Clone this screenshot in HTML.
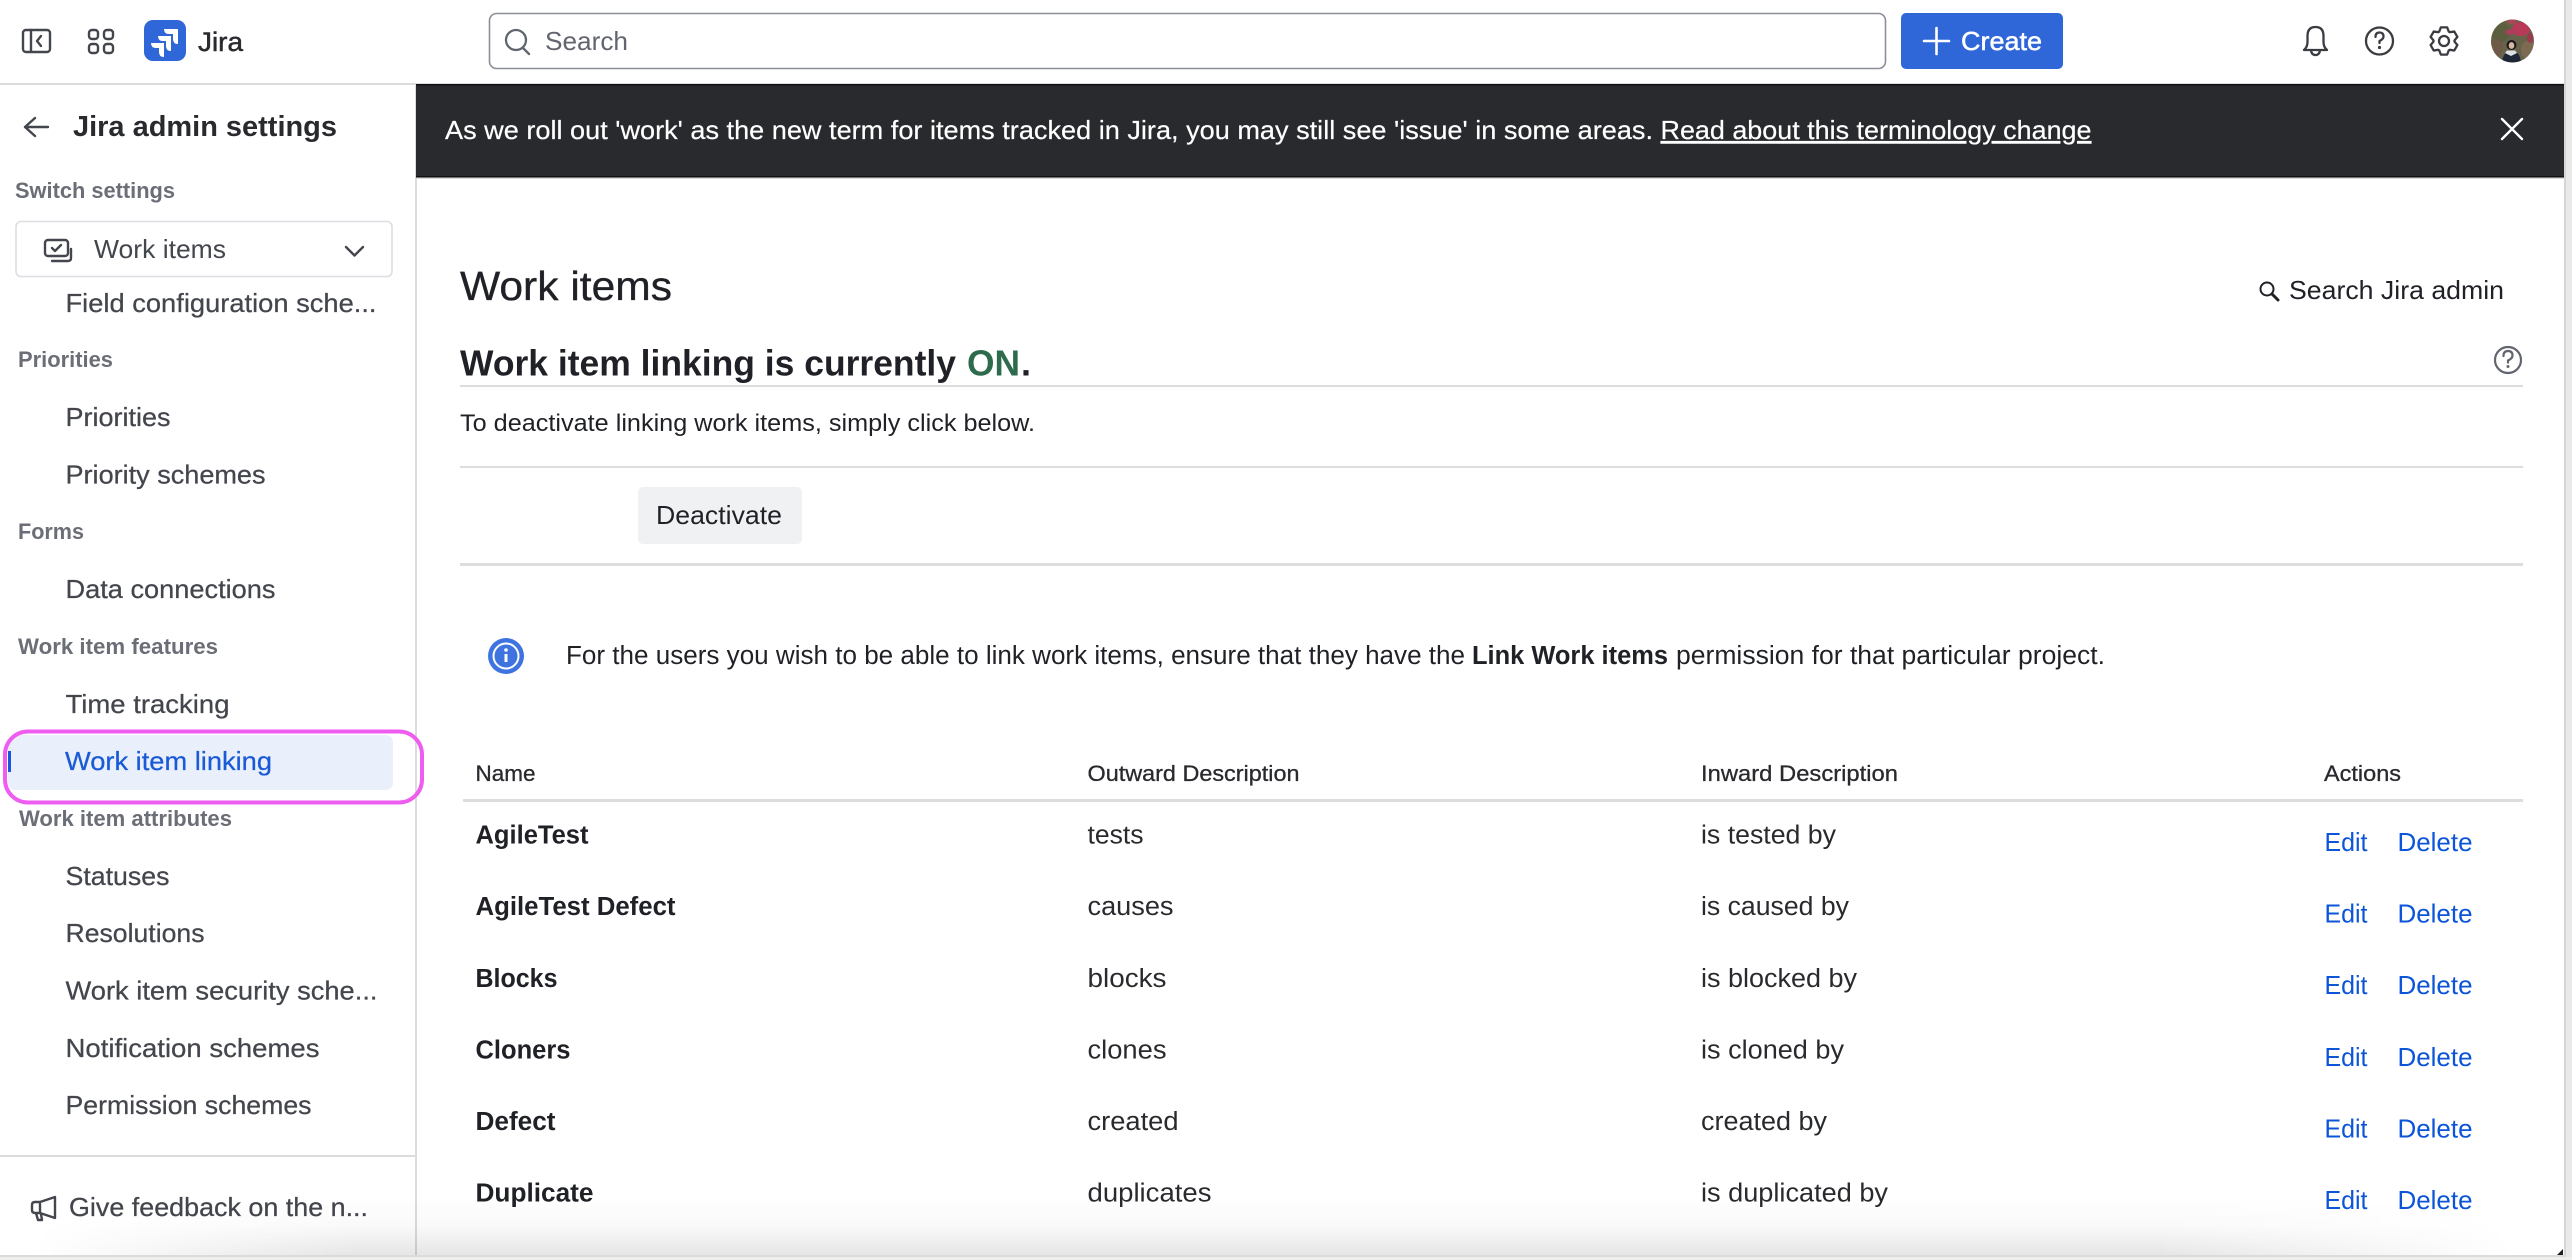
<!DOCTYPE html>
<html lang="en">
<head>
<meta charset="utf-8">
<title>Work item linking - Jira admin settings</title>
<style>
html,body{margin:0;padding:0;width:2572px;height:1260px;overflow:hidden;background:#fff}
svg{display:block}
text{font-family:"Liberation Sans",Arial,sans-serif;white-space:pre}
.nav{font-size:26px;fill:#44464d;stroke:#44464d;stroke-width:.25px}
.hd{font-size:22px;font-weight:700;fill:#6b6e76}
.n{font-size:25.5px;font-weight:700;fill:#1f2126}
.c{font-size:25.5px;fill:#292a2e}
.th{font-size:22.5px;fill:#292a2e;stroke:#292a2e;stroke-width:.3px}
.a{font-size:26px;fill:#0c55d8}
.ic{fill:none;stroke:#44464d;stroke-width:2.4;stroke-linecap:round;stroke-linejoin:round}
</style>
</head>
<body>
<svg width="2572" height="1260" viewBox="0 0 2572 1260" xmlns="http://www.w3.org/2000/svg">
<defs>
<linearGradient id="sv" gradientUnits="userSpaceOnUse" x1="0" y1="1195" x2="0" y2="1255">
<stop offset="0" stop-color="#000" stop-opacity="0"/>
<stop offset=".5" stop-color="#000" stop-opacity=".02"/>
<stop offset="1" stop-color="#000" stop-opacity=".1"/>
</linearGradient>
<linearGradient id="sh" gradientUnits="userSpaceOnUse" x1="0" y1="0" x2="2566" y2="0">
<stop offset=".012" stop-color="#fff" stop-opacity="0"/>
<stop offset=".14" stop-color="#fff" stop-opacity="1"/>
<stop offset=".84" stop-color="#fff" stop-opacity="1"/>
<stop offset=".98" stop-color="#fff" stop-opacity="0"/>
</linearGradient>
<mask id="shm" maskUnits="userSpaceOnUse" x="0" y="1195" width="2566" height="60">
<rect x="0" y="1195" width="2566" height="60" fill="url(#sh)"/>
</mask>
<clipPath id="av"><circle cx="2512.500" cy="41" r="21.500"/></clipPath>
</defs>
<rect width="2572" height="1260" fill="#fff"/>

<!-- top bar -->
<rect x="0" y="83" width="2564" height="2" fill="#dcdcdc"/>
<g class="ic">
<rect x="23" y="30" width="27" height="22" rx="3"/>
<path d="M31 30v22M41 36l-4 5 4 5"/>
<rect x="89" y="30" width="9" height="9" rx="3"/><rect x="104" y="30" width="9" height="9" rx="3"/>
<rect x="89" y="44" width="9" height="9" rx="3"/><rect x="104" y="44" width="9" height="9" rx="3"/>
</g>
<rect x="144" y="20" width="42" height="41" rx="9" fill="#2f66d8"/>
<path fill="#fff" d="M164 29h14v15q-5 0-5-5v-5h-4q-5 0-5-5zM158 36h13v15q-5 0-5-5v-5h-3q-5 0-5-5zM151 43h13v14q-5 0-5-5v-4h-3q-5 0-5-5z"/>
<text x="198" y="51" font-size="26.5" fill="#292a2e" stroke="#292a2e" stroke-width=".5" textLength="45" lengthAdjust="spacingAndGlyphs">Jira</text>

<rect x="489.5" y="13.5" width="1396" height="55" rx="7" fill="#fff" stroke="#8c8f97" stroke-width="1.6"/>
<circle cx="516" cy="40" r="10" fill="none" stroke="#5f6570" stroke-width="2.3"/>
<path d="M523 48l6 6" stroke="#5f6570" stroke-width="2.3" stroke-linecap="round"/>
<text x="545" y="50" font-size="26" fill="#626570" textLength="83" lengthAdjust="spacingAndGlyphs">Search</text>

<rect x="1901" y="13" width="162" height="56" rx="5" fill="#2f66d8"/>
<path d="M1936.500 28v26M1924 41h25" stroke="#fff" stroke-width="2.6" stroke-linecap="round"/>
<text x="1961" y="50" font-size="26" fill="#fff" stroke="#fff" stroke-width=".5" textLength="81" lengthAdjust="spacingAndGlyphs">Create</text>

<g fill="none" stroke="#3a3c42" stroke-width="2.3" stroke-linecap="round" stroke-linejoin="round">
<path d="M2304 50q3.500-3 3.500-8v-6q0-9 8-9t8 9v6q0 5 3.500 8zM2311 50q.5 5 4.500 5t4.500-5"/>
<circle cx="2379.500" cy="41" r="13.500"/>
<path d="M2375.500 37q0-4.500 4-4.500t4 4q0 2.500-4 4.500v2"/>
<path transform="translate(2444 41)" d="M-3.150-13.640 3.150-13.640 4.770-9.360 5.720-8.810 10.240-9.550 13.390-4.090 10.490-.55 10.490.55 13.390 4.090 10.240 9.550 5.720 8.810 4.770 9.360 3.150 13.640-3.150 13.640-4.770 9.360-5.720 8.810-10.240 9.550-13.390 4.090-10.490.55-10.490-.55-13.390-4.090-10.240-9.550-5.720-8.810-4.770-9.360z"/>
<circle cx="2444" cy="41" r="5"/>
</g>
<circle cx="2379.500" cy="47.500" r="1.600" fill="#3a3c42"/>

<g clip-path="url(#av)">
<rect x="2490" y="18" width="46" height="46" fill="#66634a"/>
<ellipse cx="2500" cy="32" rx="10" ry="10" fill="#5b5f40"/>
<ellipse cx="2496" cy="48" rx="7" ry="9" fill="#6f5a48"/>
<ellipse cx="2528" cy="50" rx="7" ry="9" fill="#7d6a52"/>
<ellipse cx="2521" cy="29" rx="9" ry="7" fill="#b83a58"/>
<ellipse cx="2510" cy="32" rx="5" ry="3" fill="#a8405a"/>
<ellipse cx="2512" cy="21.500" rx="5" ry="2.500" fill="#a84a55"/>
<ellipse cx="2530" cy="38" rx="3" ry="5" fill="#9c3a4c"/>
<circle cx="2511.500" cy="45" r="5" fill="#1c1a1e"/>
<ellipse cx="2511.500" cy="45.500" rx="2.800" ry="3.400" fill="#d8b8a0"/>
<path d="M2502 64q.5-13 9.500-13t9.500 13z" fill="#1d2738"/>
<path d="M2505 53l6 3 6-3-2-2.500h-8z" fill="#dfe2e4"/>
</g>

<!-- sidebar -->
<rect x="415" y="85" width="2" height="1170" fill="#dcdcdc"/>
<path d="M48 127H25M35 118l-10 9 10 9" fill="none" stroke="#44464d" stroke-width="2.4" stroke-linecap="round" stroke-linejoin="round"/>
<text x="73" y="136" font-size="29" font-weight="700" fill="#292a2e" textLength="264" lengthAdjust="spacingAndGlyphs">Jira admin settings</text>
<text x="15" y="198" class="hd" textLength="160" lengthAdjust="spacingAndGlyphs">Switch settings</text>
<rect x="16" y="221.500" width="376" height="55" rx="5" fill="#fff" stroke="#dddee1" stroke-width="1.600"/>
<g class="ic" stroke-width="2.200">
<rect x="45" y="240" width="23" height="16" rx="3"/>
<path d="M52 248l3 3 6-6M71 249v9q0 3-3 3H52"/>
</g>
<text x="94" y="258" font-size="26" fill="#44464d" textLength="132" lengthAdjust="spacingAndGlyphs">Work items</text>
<path d="M346 247l8.500 8.500L363 247" fill="none" stroke="#44464d" stroke-width="2.400" stroke-linecap="round" stroke-linejoin="round"/>
<text x="65.500" y="312" class="nav" textLength="311" lengthAdjust="spacingAndGlyphs">Field configuration sche...</text>

<text x="18" y="367" class="hd" textLength="95" lengthAdjust="spacingAndGlyphs">Priorities</text>
<text x="65.500" y="426" class="nav" textLength="105" lengthAdjust="spacingAndGlyphs">Priorities</text>
<text x="65.500" y="483.500" class="nav" textLength="200" lengthAdjust="spacingAndGlyphs">Priority schemes</text>
<text x="18" y="539" class="hd" textLength="66" lengthAdjust="spacingAndGlyphs">Forms</text>
<text x="65.500" y="598" class="nav" textLength="210" lengthAdjust="spacingAndGlyphs">Data connections</text>
<text x="18" y="654" class="hd" textLength="200" lengthAdjust="spacingAndGlyphs">Work item features</text>
<text x="65.500" y="713" class="nav" textLength="164" lengthAdjust="spacingAndGlyphs">Time tracking</text>

<rect x="8" y="735" width="385" height="55" rx="7" fill="#e9f0fc"/>
<rect x="8" y="751" width="3" height="21" fill="#1558e0"/>
<text x="65" y="770" font-size="26" fill="#1a5ad6" stroke="#1a5ad6" stroke-width=".25" textLength="207" lengthAdjust="spacingAndGlyphs">Work item linking</text>
<rect x="5" y="731.500" width="417" height="71" rx="23" fill="none" stroke="#ee5cf0" stroke-width="4"/>

<text x="19" y="826" class="hd" textLength="213" lengthAdjust="spacingAndGlyphs">Work item attributes</text>
<text x="65.500" y="885" class="nav" textLength="104" lengthAdjust="spacingAndGlyphs">Statuses</text>
<text x="65.500" y="942" class="nav" textLength="139" lengthAdjust="spacingAndGlyphs">Resolutions</text>
<text x="65.500" y="999.500" class="nav" textLength="312" lengthAdjust="spacingAndGlyphs">Work item security sche...</text>
<text x="65.500" y="1057" class="nav" textLength="254" lengthAdjust="spacingAndGlyphs">Notification schemes</text>
<text x="65.500" y="1114" class="nav" textLength="246" lengthAdjust="spacingAndGlyphs">Permission schemes</text>

<rect x="0" y="1155" width="415" height="2" fill="#dcdcdc"/>
<path class="ic" d="M55 1197v21l-15-5H35q-3 0-3-3v-5q0-3 3-3h5zM40 1204v9M36 1213l2 7h4l-1-6"/>
<text x="69" y="1216" class="nav" textLength="299" lengthAdjust="spacingAndGlyphs">Give feedback on the n...</text>

<!-- banner -->
<rect x="416" y="85" width="2148" height="92" fill="#292a2e"/>
<rect x="416" y="84" width="2148" height="1.500" fill="#111"/>
<rect x="416" y="176" width="2148" height="1.500" fill="#111"/>
<rect x="416" y="177.500" width="2148" height="1.500" fill="#dcdcdc"/>
<text x="445" y="139" font-size="26" fill="#fff" stroke="#fff" stroke-width=".2" textLength="1208" lengthAdjust="spacingAndGlyphs">As we roll out 'work' as the new term for items tracked in Jira, you may still see 'issue' in some areas.</text>
<text x="1660.500" y="139" font-size="26" fill="#fff" stroke="#fff" stroke-width=".2" text-decoration="underline" textLength="431" lengthAdjust="spacingAndGlyphs">Read about this terminology change</text>
<path d="M2502 119l20 20M2522 119l-20 20" stroke="#fff" stroke-width="2.400" stroke-linecap="round"/>

<!-- main heading -->
<text x="460" y="300" font-size="41" fill="#1f2126" stroke="#1f2126" stroke-width=".35" textLength="212" lengthAdjust="spacingAndGlyphs">Work items</text>
<circle cx="2267" cy="289" r="6.500" fill="none" stroke="#1f2126" stroke-width="2"/>
<path d="M2272 294l6 6" stroke="#1f2126" stroke-width="3" stroke-linecap="round"/>
<text x="2289" y="299" font-size="26" fill="#1f2126" textLength="215" lengthAdjust="spacingAndGlyphs">Search Jira admin</text>

<text x="460" y="375.500" font-size="36" font-weight="700" fill="#1f2126" textLength="496" lengthAdjust="spacingAndGlyphs">Work item linking is currently</text>
<text x="967" y="375.500" font-size="36" font-weight="700" fill="#2e6b4d" textLength="53" lengthAdjust="spacingAndGlyphs">ON</text>
<text x="1021" y="375.500" font-size="36" font-weight="700" fill="#1f2126">.</text>
<rect x="460" y="385" width="2063" height="2" fill="#dddddd"/>
<circle cx="2508" cy="360" r="13" fill="none" stroke="#626570" stroke-width="2.200"/>
<path d="M2503.500 356q0-5 4.500-5t4.500 4.500q0 3-4.500 5v2" fill="none" stroke="#626570" stroke-width="2.200" stroke-linecap="round"/>
<circle cx="2508" cy="366.500" r="1.500" fill="#626570"/>

<text x="460" y="431" font-size="24.500" fill="#1f2126" textLength="575" lengthAdjust="spacingAndGlyphs">To deactivate linking work items, simply click below.</text>
<rect x="460" y="466" width="2063" height="2" fill="#dddddd"/>
<rect x="638" y="487" width="164" height="57" rx="5" fill="#f0f1f2"/>
<text x="656" y="524" font-size="26" fill="#1f2126" textLength="126" lengthAdjust="spacingAndGlyphs">Deactivate</text>
<rect x="460" y="563" width="2063" height="3" fill="#dddddd"/>

<circle cx="506" cy="656" r="18" fill="#3f74e0"/>
<circle cx="506" cy="656" r="12.500" fill="none" stroke="#fff" stroke-width="2"/>
<rect x="504.500" y="654" width="3" height="8" fill="#fff"/>
<circle cx="506" cy="650" r="1.800" fill="#fff"/>
<text x="566" y="664" font-size="25.500" fill="#1f2126" textLength="899" lengthAdjust="spacingAndGlyphs">For the users you wish to be able to link work items, ensure that they have the</text>
<text x="1472" y="664" font-size="25.500" font-weight="700" fill="#1f2126" textLength="196" lengthAdjust="spacingAndGlyphs">Link Work items</text>
<text x="1676" y="664" font-size="25.500" fill="#1f2126" textLength="429" lengthAdjust="spacingAndGlyphs">permission for that particular project.</text>

<!-- table -->
<text x="475.500" y="781" class="th" textLength="60" lengthAdjust="spacingAndGlyphs">Name</text>
<text x="1087.500" y="781" class="th" textLength="212" lengthAdjust="spacingAndGlyphs">Outward Description</text>
<text x="1701" y="781" class="th" textLength="197" lengthAdjust="spacingAndGlyphs">Inward Description</text>
<text x="2324" y="781" class="th" textLength="77" lengthAdjust="spacingAndGlyphs">Actions</text>
<rect x="463" y="799" width="2060" height="3" fill="#dddddd"/>

<text x="475.500" y="843.500" class="n" textLength="113" lengthAdjust="spacingAndGlyphs">AgileTest</text>
<text x="1087.500" y="843.500" class="c" textLength="56" lengthAdjust="spacingAndGlyphs">tests</text>
<text x="1701" y="843.500" class="c" textLength="135" lengthAdjust="spacingAndGlyphs">is tested by</text>
<text x="2324.500" y="851" class="a" textLength="43" lengthAdjust="spacingAndGlyphs">Edit</text>
<text x="2397.500" y="851" class="a" textLength="75" lengthAdjust="spacingAndGlyphs">Delete</text>

<text x="475.500" y="915" class="n" textLength="200" lengthAdjust="spacingAndGlyphs">AgileTest Defect</text>
<text x="1087.500" y="915" class="c" textLength="86" lengthAdjust="spacingAndGlyphs">causes</text>
<text x="1701" y="915" class="c" textLength="148" lengthAdjust="spacingAndGlyphs">is caused by</text>
<text x="2324.500" y="922.600" class="a" textLength="43" lengthAdjust="spacingAndGlyphs">Edit</text>
<text x="2397.500" y="922.600" class="a" textLength="75" lengthAdjust="spacingAndGlyphs">Delete</text>

<text x="475.500" y="987" class="n" textLength="82" lengthAdjust="spacingAndGlyphs">Blocks</text>
<text x="1087.500" y="987" class="c" textLength="79" lengthAdjust="spacingAndGlyphs">blocks</text>
<text x="1701" y="987" class="c" textLength="156" lengthAdjust="spacingAndGlyphs">is blocked by</text>
<text x="2324.500" y="994.200" class="a" textLength="43" lengthAdjust="spacingAndGlyphs">Edit</text>
<text x="2397.500" y="994.200" class="a" textLength="75" lengthAdjust="spacingAndGlyphs">Delete</text>

<text x="475.500" y="1058.500" class="n" textLength="95" lengthAdjust="spacingAndGlyphs">Cloners</text>
<text x="1087.500" y="1058.500" class="c" textLength="79" lengthAdjust="spacingAndGlyphs">clones</text>
<text x="1701" y="1058.500" class="c" textLength="143" lengthAdjust="spacingAndGlyphs">is cloned by</text>
<text x="2324.500" y="1065.800" class="a" textLength="43" lengthAdjust="spacingAndGlyphs">Edit</text>
<text x="2397.500" y="1065.800" class="a" textLength="75" lengthAdjust="spacingAndGlyphs">Delete</text>

<text x="475.500" y="1130" class="n" textLength="80" lengthAdjust="spacingAndGlyphs">Defect</text>
<text x="1087.500" y="1130" class="c" textLength="91" lengthAdjust="spacingAndGlyphs">created</text>
<text x="1701" y="1130" class="c" textLength="126" lengthAdjust="spacingAndGlyphs">created by</text>
<text x="2324.500" y="1137.400" class="a" textLength="43" lengthAdjust="spacingAndGlyphs">Edit</text>
<text x="2397.500" y="1137.400" class="a" textLength="75" lengthAdjust="spacingAndGlyphs">Delete</text>

<text x="475.500" y="1201.500" class="n" textLength="118" lengthAdjust="spacingAndGlyphs">Duplicate</text>
<text x="1087.500" y="1201.500" class="c" textLength="124" lengthAdjust="spacingAndGlyphs">duplicates</text>
<text x="1701" y="1201.500" class="c" textLength="187" lengthAdjust="spacingAndGlyphs">is duplicated by</text>
<text x="2324.500" y="1209" class="a" textLength="43" lengthAdjust="spacingAndGlyphs">Edit</text>
<text x="2397.500" y="1209" class="a" textLength="75" lengthAdjust="spacingAndGlyphs">Delete</text>

<!-- bottom shadow and window edge -->
<rect x="0" y="1195" width="2566" height="60" fill="url(#sv)" mask="url(#shm)"/>
<rect x="2566" y="0" width="6" height="1260" fill="#e9e9e9"/>
<rect x="2564" y="0" width="2" height="1257" fill="#d6d6d4"/>
<rect x="0" y="1257" width="2572" height="3" fill="#efefed"/>
<rect x="0" y="1255" width="2566" height="2" fill="#dcdbd8"/>
<path d="M2563 1249v6h-6z" fill="#221c24"/>
</svg>
</body>
</html>
